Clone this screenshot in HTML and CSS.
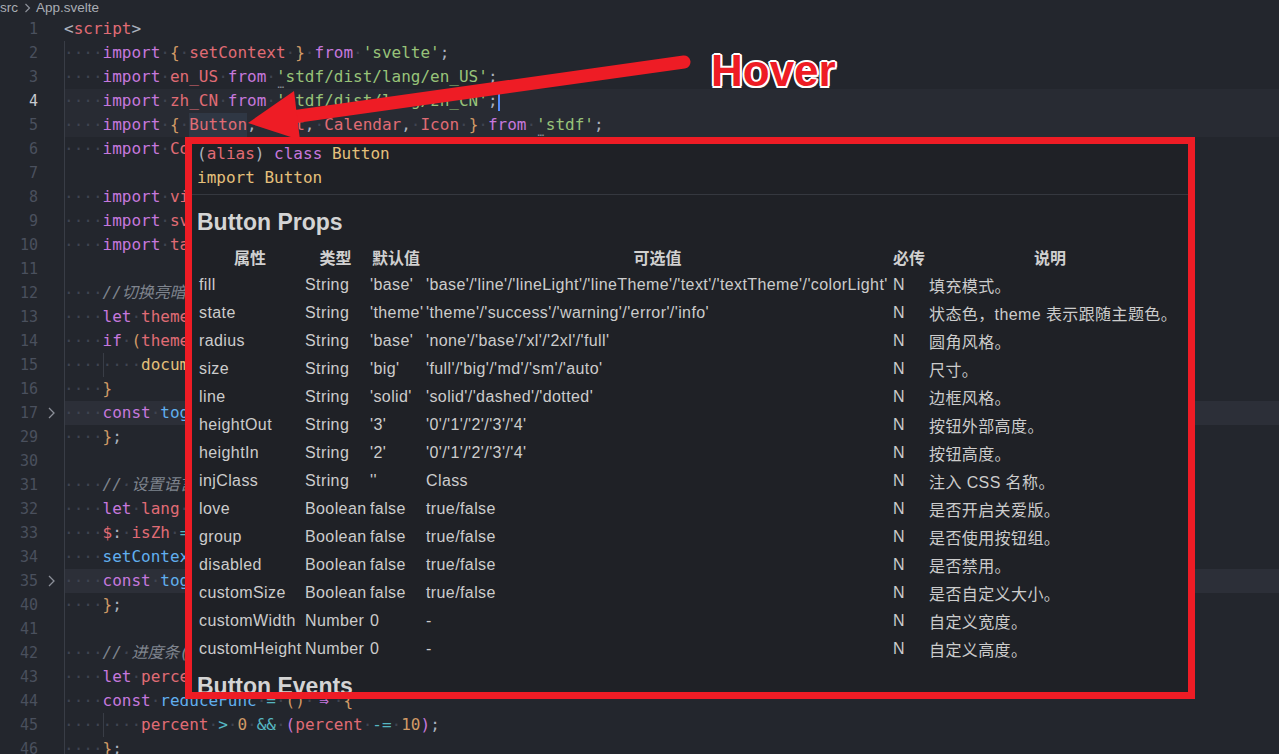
FILE: index.html
```html
<!DOCTYPE html>
<html lang="zh-CN">
<head>
<meta charset="utf-8">
<title>App.svelte</title>
<link rel="stylesheet" href="styles.css">
</head>
<body>
<div class="editor">
  <div class="crumbs"><span>src</span><svg class="crumb-sep" width="7" height="10" viewBox="0 0 7 10"><path d="M1.5 1 L5.5 5 L1.5 9" fill="none" stroke="#8d9199" stroke-width="1.2"/></svg><span>App.svelte</span></div>
  <div class="code">
    <div class="line"><span class="ln">1</span><span class="fold"></span><span class="src"><span class="t">&lt;</span><span class="v">script</span><span class="t">&gt;</span></span></div>
    <div class="line"><span class="ln">2</span><span class="fold"></span><span class="src"><span class="ind w">····</span><span class="k">import</span><span class="w">·</span><span class="p">{</span><span class="w">·</span><span class="v">setContext</span><span class="w">·</span><span class="p">}</span><span class="w">·</span><span class="k">from</span><span class="w">·</span><span class="s">'svelte'</span><span class="t">;</span></span></div>
    <div class="line"><span class="ln">3</span><span class="fold"></span><span class="src"><span class="ind w">····</span><span class="k">import</span><span class="w">·</span><span class="v">en_US</span><span class="w">·</span><span class="k">from</span><span class="w">·</span><span class="s"><span class="hint">'</span>stdf/dist/lang/en_US'</span><span class="t">;</span></span></div>
    <div class="line cur"><span class="ln">4</span><span class="fold"></span><span class="src"><span class="ind w">····</span><span class="k">import</span><span class="w">·</span><span class="v">zh_CN</span><span class="w">·</span><span class="k">from</span><span class="w">·</span><span class="s">'stdf/dist/lang/zh_CN'</span><span class="t">;</span><span class="caret"></span></span></div>
    <div class="line hov"><span class="ln">5</span><span class="fold"></span><span class="src"><span class="ind w">····</span><span class="k">import</span><span class="w">·</span><span class="p">{</span><span class="w">·</span><span class="v wh">Button</span><span class="t">,</span><span class="w">·</span><span class="v">Text</span><span class="t">,</span><span class="w">·</span><span class="v">Calendar</span><span class="t">,</span><span class="w">·</span><span class="v">Icon</span><span class="w">·</span><span class="p">}</span><span class="w">·</span><span class="k">from</span><span class="w">·</span><span class="s"><span class="hint">'</span>stdf'</span><span class="t">;</span></span></div>
    <div class="line"><span class="ln">6</span><span class="fold"></span><span class="src"><span class="ind w">····</span><span class="k">import</span><span class="w">·</span><span class="v">ConfigProvider</span><span class="w">·</span><span class="k">from</span><span class="w">·</span><span class="s">'stdf'</span><span class="t">;</span></span></div>
    <div class="line"><span class="ln">7</span><span class="fold"></span><span class="src"><span class="ind">    </span></span></div>
    <div class="line"><span class="ln">8</span><span class="fold"></span><span class="src"><span class="ind w">····</span><span class="k">import</span><span class="w">·</span><span class="v">viteLogo</span><span class="w">·</span><span class="k">from</span><span class="w">·</span><span class="s">'/vite.svg'</span><span class="t">;</span></span></div>
    <div class="line"><span class="ln">9</span><span class="fold"></span><span class="src"><span class="ind w">····</span><span class="k">import</span><span class="w">·</span><span class="v">svelteLogo</span><span class="w">·</span><span class="k">from</span><span class="w">·</span><span class="s">'./assets/svelte.svg'</span><span class="t">;</span></span></div>
    <div class="line"><span class="ln">10</span><span class="fold"></span><span class="src"><span class="ind w">····</span><span class="k">import</span><span class="w">·</span><span class="v">tailwindLogo</span><span class="w">·</span><span class="k">from</span><span class="w">·</span><span class="s">'./assets/tailwind.svg'</span><span class="t">;</span></span></div>
    <div class="line"><span class="ln">11</span><span class="fold"></span><span class="src"><span class="ind">    </span></span></div>
    <div class="line"><span class="ln">12</span><span class="fold"></span><span class="src"><span class="ind w">····</span><span class="c">//切换亮暗模式</span></span></div>
    <div class="line"><span class="ln">13</span><span class="fold"></span><span class="src"><span class="ind w">····</span><span class="k">let</span><span class="w">·</span><span class="v">theme</span><span class="w">·</span><span class="o">=</span><span class="w">·</span><span class="y">localStorage</span><span class="t">.</span><span class="f">getItem</span><span class="p">(</span><span class="s">'theme'</span><span class="p">)</span><span class="t">;</span></span></div>
    <div class="line"><span class="ln">14</span><span class="fold"></span><span class="src"><span class="ind w">····</span><span class="k">if</span><span class="w">·</span><span class="p">(</span><span class="v">theme</span><span class="w">·</span><span class="o">===</span><span class="w">·</span><span class="s">'dark'</span><span class="p">)</span><span class="w">·</span><span class="k">{</span></span></div>
    <div class="line"><span class="ln">15</span><span class="fold"></span><span class="src"><span class="ind w">····</span><span class="ind w">····</span><span class="y">document</span><span class="t">.</span><span class="v">documentElement</span><span class="t">.</span><span class="v">classList</span><span class="t">.</span><span class="f">add</span><span class="p">(</span><span class="s">'dark'</span><span class="p">)</span><span class="t">;</span></span></div>
    <div class="line"><span class="ln">16</span><span class="fold"></span><span class="src"><span class="ind w">····</span><span class="p">}</span></span></div>
    <div class="line folded"><span class="ln">17</span><span class="fold"><svg width="7" height="12" viewBox="0 0 7 12"><path d="M1 1 L6 6 L1 11" fill="none" stroke="#8b8f98" stroke-width="1.3"/></svg></span><span class="src"><span class="ind w">····</span><span class="k">const</span><span class="w">·</span><span class="f">toggleTheme</span><span class="w">·</span><span class="o">=</span><span class="w">·</span><span class="p">()</span><span class="w">·</span><span class="k lig">⇒</span><span class="w">·</span><span class="p">{</span></span></div>
    <div class="line"><span class="ln">29</span><span class="fold"></span><span class="src"><span class="ind w">····</span><span class="p">}</span><span class="t">;</span></span></div>
    <div class="line"><span class="ln">30</span><span class="fold"></span><span class="src"><span class="ind">    </span></span></div>
    <div class="line"><span class="ln">31</span><span class="fold"></span><span class="src"><span class="ind w">····</span><span class="c">//<span class="w">·</span>设置语言</span></span></div>
    <div class="line"><span class="ln">32</span><span class="fold"></span><span class="src"><span class="ind w">····</span><span class="k">let</span><span class="w">·</span><span class="v">lang</span><span class="w">·</span><span class="o">=</span><span class="w">·</span><span class="s">'zh_CN'</span><span class="t">;</span></span></div>
    <div class="line"><span class="ln">33</span><span class="fold"></span><span class="src"><span class="ind w">····</span><span class="v">$</span><span class="t">:</span><span class="w">·</span><span class="v">isZh</span><span class="w">·</span><span class="o">=</span><span class="w">·</span><span class="v">lang</span><span class="w">·</span><span class="o">===</span><span class="w">·</span><span class="s">'zh_CN'</span><span class="t">;</span></span></div>
    <div class="line"><span class="ln">34</span><span class="fold"></span><span class="src"><span class="ind w">····</span><span class="f">setContext</span><span class="p">(</span><span class="s">'STDF_lang'</span><span class="t">,</span><span class="w">·</span><span class="v">isZh</span><span class="w">·</span><span class="o">?</span><span class="w">·</span><span class="v">zh_CN</span><span class="w">·</span><span class="o">:</span><span class="w">·</span><span class="v">en_US</span><span class="p">)</span><span class="t">;</span></span></div>
    <div class="line folded"><span class="ln">35</span><span class="fold"><svg width="7" height="12" viewBox="0 0 7 12"><path d="M1 1 L6 6 L1 11" fill="none" stroke="#8b8f98" stroke-width="1.3"/></svg></span><span class="src"><span class="ind w">····</span><span class="k">const</span><span class="w">·</span><span class="f">toggleLang</span><span class="w">·</span><span class="o">=</span><span class="w">·</span><span class="p">()</span><span class="w">·</span><span class="k lig">⇒</span><span class="w">·</span><span class="p">{</span></span></div>
    <div class="line"><span class="ln">40</span><span class="fold"></span><span class="src"><span class="ind w">····</span><span class="p">}</span><span class="t">;</span></span></div>
    <div class="line"><span class="ln">41</span><span class="fold"></span><span class="src"><span class="ind">    </span></span></div>
    <div class="line"><span class="ln">42</span><span class="fold"></span><span class="src"><span class="ind w">····</span><span class="c">//<span class="w">·</span>进度条(Progress)</span></span></div>
    <div class="line"><span class="ln">43</span><span class="fold"></span><span class="src"><span class="ind w">····</span><span class="k">let</span><span class="w">·</span><span class="v">percent</span><span class="w">·</span><span class="o">=</span><span class="w">·</span><span class="n">50</span><span class="t">;</span></span></div>
    <div class="line"><span class="ln">44</span><span class="fold"></span><span class="src"><span class="ind w">····</span><span class="k">const</span><span class="w">·</span><span class="f">reduceFunc</span><span class="w">·</span><span class="o">=</span><span class="w">·</span><span class="p">()</span><span class="w">·</span><span class="k lig">⇒</span><span class="w">·</span><span class="p">{</span></span></div>
    <div class="line"><span class="ln">45</span><span class="fold"></span><span class="src"><span class="ind w">····</span><span class="ind w">····</span><span class="v">percent</span><span class="w">·</span><span class="o">&gt;</span><span class="w">·</span><span class="n">0</span><span class="w">·</span><span class="o">&amp;&amp;</span><span class="w">·</span><span class="k">(</span><span class="v">percent</span><span class="w">·</span><span class="o">-=</span><span class="w">·</span><span class="n">10</span><span class="k">)</span><span class="t">;</span></span></div>
    <div class="line"><span class="ln">46</span><span class="fold"></span><span class="src"><span class="ind w">····</span><span class="p">}</span><span class="t">;</span></span></div>
  </div>
</div>

<div class="hover">
  <div class="sig">
    <div><span class="t">(</span><span class="v">alias</span><span class="t">)</span> <span class="k">class</span> <span class="y">Button</span></div>
    <div><span class="y">import Button</span></div>
  </div>
  <div class="rule"></div>
  <h2 class="doc-h">Button Props</h2>
  <table class="props">
    <colgroup><col class="c1"><col class="c2"><col class="c3"><col class="c4"><col class="c5"><col class="c6"></colgroup>
    <thead>
      <tr><th>属性</th><th>类型</th><th>默认值</th><th>可选值</th><th>必传</th><th>说明</th></tr>
    </thead>
    <tbody>
      <tr><td>fill</td><td>String</td><td>'base'</td><td>'base'/'line'/'lineLight'/'lineTheme'/'text'/'textTheme'/'colorLight'</td><td>N</td><td>填充模式。</td></tr>
      <tr><td>state</td><td>String</td><td>'theme'</td><td>'theme'/'success'/'warning'/'error'/'info'</td><td>N</td><td>状态色，theme 表示跟随主题色。</td></tr>
      <tr><td>radius</td><td>String</td><td>'base'</td><td>'none'/'base'/'xl'/'2xl'/'full'</td><td>N</td><td>圆角风格。</td></tr>
      <tr><td>size</td><td>String</td><td>'big'</td><td>'full'/'big'/'md'/'sm'/'auto'</td><td>N</td><td>尺寸。</td></tr>
      <tr><td>line</td><td>String</td><td>'solid'</td><td>'solid'/'dashed'/'dotted'</td><td>N</td><td>边框风格。</td></tr>
      <tr><td>heightOut</td><td>String</td><td>'3'</td><td>'0'/'1'/'2'/'3'/'4'</td><td>N</td><td>按钮外部高度。</td></tr>
      <tr><td>heightIn</td><td>String</td><td>'2'</td><td>'0'/'1'/'2'/'3'/'4'</td><td>N</td><td>按钮高度。</td></tr>
      <tr><td>injClass</td><td>String</td><td>''</td><td>Class</td><td>N</td><td>注入 CSS 名称。</td></tr>
      <tr><td>love</td><td>Boolean</td><td>false</td><td>true/false</td><td>N</td><td>是否开启关爱版。</td></tr>
      <tr><td>group</td><td>Boolean</td><td>false</td><td>true/false</td><td>N</td><td>是否使用按钮组。</td></tr>
      <tr><td>disabled</td><td>Boolean</td><td>false</td><td>true/false</td><td>N</td><td>是否禁用。</td></tr>
      <tr><td>customSize</td><td>Boolean</td><td>false</td><td>true/false</td><td>N</td><td>是否自定义大小。</td></tr>
      <tr><td>customWidth</td><td>Number</td><td>0</td><td>-</td><td>N</td><td>自定义宽度。</td></tr>
      <tr><td>customHeight</td><td>Number</td><td>0</td><td>-</td><td>N</td><td>自定义高度。</td></tr>
    </tbody>
  </table>
  <h2 class="doc-h events">Button Events</h2>
</div>

<svg class="arrow" width="1279" height="754" viewBox="0 0 1279 754">
  <line x1="684" y1="62" x2="292" y2="117" stroke="#ee1c25" stroke-width="13" stroke-linecap="round"/>
  <polygon points="248,123 294,91 300,140" fill="#ee1c25"/>
</svg>
<div class="label">Hover</div>
</body>
</html>
```

FILE: styles.css
```css
* { box-sizing: border-box; margin: 0; padding: 0; }

html, body {
  width: 1279px;
  height: 754px;
  overflow: hidden;
}

body {
  background: #23262d;
  font-family: "Liberation Sans", Arial, "Noto Sans CJK SC", sans-serif;
  position: relative;
}

.crumbs {
  height: 17px;
  display: flex;
  align-items: center;
  gap: 5px;
  font-size: 13.5px;
  line-height: 16px;
  color: #a9adb4;
  padding-bottom: 2px;
}

.crumb-sep { margin: 0 0 0 1px; }

.code {
  font-family: "DejaVu Sans Mono", "Noto Sans CJK SC", monospace;
  font-size: 16px;
  line-height: 24px;
}

.line {
  display: flex;
  height: 24px;
  white-space: pre;
}

.ln {
  width: 38px;
  flex: none;
  text-align: right;
  color: #4a505d;
  font-size: 15px;
}

.line.cur .ln { color: #c8cad0; }

.fold {
  width: 26px;
  flex: none;
  display: flex;
  align-items: center;
  justify-content: center;
}

.src {
  flex: 1;
  color: #abb2bf;
}

.line.cur .src,
.line.hov .src { background: #282b33; }

.line.folded .src { background: #2c2f38; }

.ind {
  display: inline-block;
  height: 24px;
  vertical-align: top;
  box-shadow: inset 1px 0 0 #393d46;
}

.w { color: #3f4451; }
.k { color: #c678dd; }
.v { color: #e06c75; }
.s { color: #98c379; }
.p { color: #d19a66; }
.f { color: #61afef; }
.o { color: #56b6c2; }
.n { color: #d19a66; }
.y { color: #e5c07b; }
.t { color: #abb2bf; }
.c { color: #7f848e; font-style: italic; }

.lig {
  display: inline-block;
  width: 2ch;
  text-align: center;
}

.wh {
  display: inline-block;
  height: 24px;
  background: #2f3744;
}

.hint { position: relative; }
.hint::after {
  content: "…";
  position: absolute;
  left: 0;
  width: 100%;
  bottom: -4px;
  font-size: 11px;
  line-height: 10px;
  text-align: center;
  color: #8a8f98;
  font-style: normal;
}

.caret {
  display: inline-block;
  width: 2px;
  height: 20px;
  margin-top: 2px;
  vertical-align: top;
  background: #528bff;
}

/* hover widget with annotation frame */
.hover {
  position: absolute;
  left: 185px;
  top: 137px;
  width: 1010px;
  height: 562px;
  border: 7px solid #ee1c25;
  background: #1f2126;
  overflow: hidden;
  padding: 0 5px;
  color: #cccccc;
}

.sig {
  font-family: "DejaVu Sans Mono", monospace;
  font-size: 16px;
  line-height: 24px;
  margin-top: -2px;
  white-space: nowrap;
}

.rule {
  height: 1px;
  background: #35383f;
  margin: 4px -5px 0;
}

.doc-h {
  font-size: 23px;
  line-height: 28px;
  font-weight: 700;
  color: #d4d4d4;
  margin-top: 13px;
  white-space: nowrap;
}

.doc-h.events { margin-top: 9px; }

.props {
  margin-top: 7px;
  border-collapse: collapse;
  table-layout: fixed;
  width: 976px;
}

.c1 { width: 106px; }
.c2 { width: 65px; }
.c3 { width: 56px; }
.c4 { width: 467px; }
.c5 { width: 36px; }
.c6 { width: 246px; }

.props th,
.props td {
  height: 28px;
  padding: 0 2px;
  white-space: nowrap;
  text-align: left;
  vertical-align: middle;
  color: #cccccc;
  font-size: 16px;
  letter-spacing: 0.4px;
  font-weight: 400;
}

.props th {
  text-align: center;
  font-weight: 700;
  letter-spacing: 0;
  color: #d0d0d0;
}

.arrow {
  position: absolute;
  left: 0;
  top: 0;
  pointer-events: none;
}

.label {
  position: absolute;
  left: 711px;
  top: 49px;
  font-family: "Liberation Sans", Arial, sans-serif;
  font-weight: 700;
  font-size: 44px;
  line-height: 44px;
  color: #ee1c25;
  text-shadow:
    2px 0 0 #fff, -2px 0 0 #fff, 0 2px 0 #fff, 0 -2px 0 #fff,
    1.5px 1.5px 0 #fff, -1.5px 1.5px 0 #fff, 1.5px -1.5px 0 #fff, -1.5px -1.5px 0 #fff;
}
```
